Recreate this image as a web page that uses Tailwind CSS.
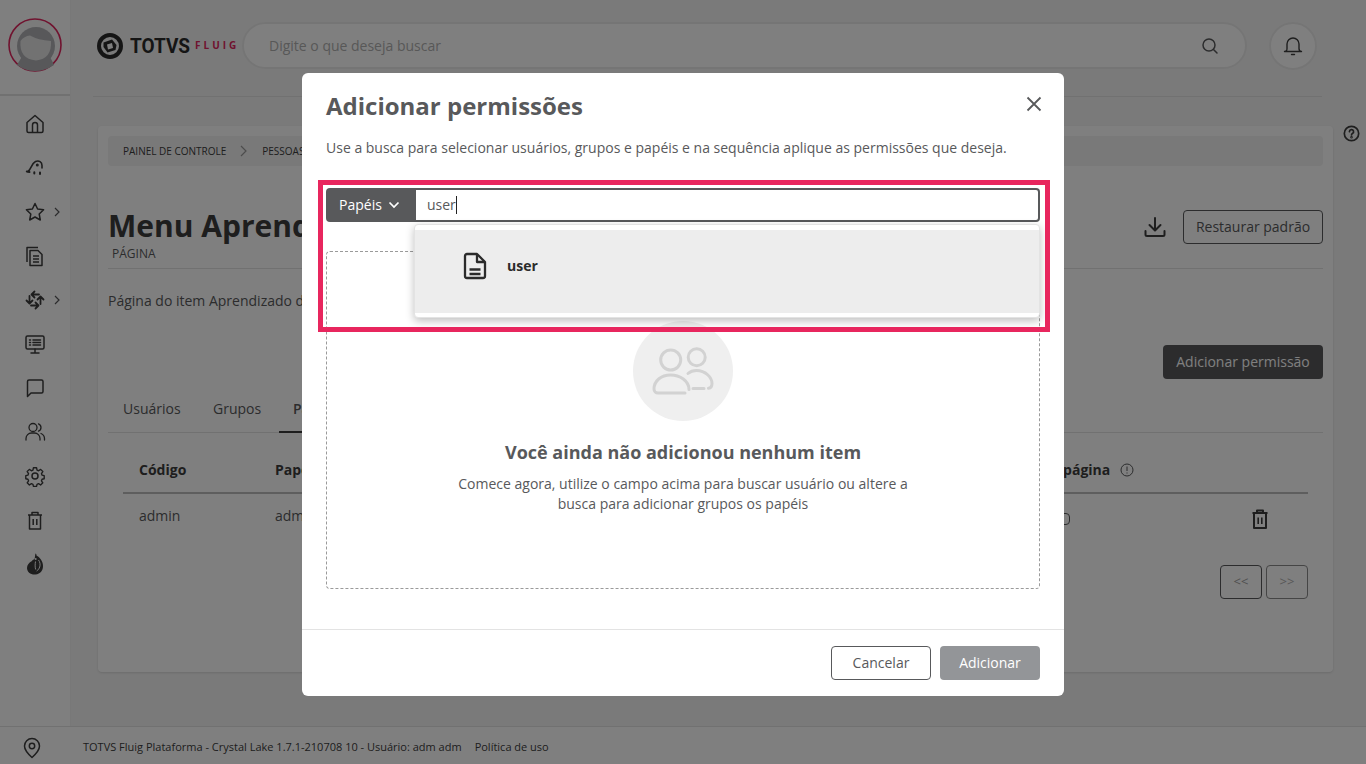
<!DOCTYPE html>
<html lang="pt-BR">
<head>
  <meta charset="UTF-8" />
  <title>Menu Aprendizado</title>
  <script src="https://cdn.jsdelivr.net/npm/@tailwindcss/browser@4"></script>
</head>
<body class="relative w-[1366px] h-[764px] overflow-hidden bg-[#f5f5f5] font-['Open_Sans',sans-serif] text-[#58595b]">
  <div class="flex flex-col h-full">
    <div class="flex flex-1 min-h-0">
      <!-- Sidebar -->
      <aside class="w-[71px] shrink-0 bg-white border-r border-[#f0f0f0]">
        <div class="h-[96px] border-b-2 border-[#e3e3e3] pt-[18px] pl-[8px]">
          <svg width="54" height="54" viewBox="0 0 54 54">
            <circle cx="27" cy="27" r="26" fill="#f7f7f7" stroke="#e0265f" stroke-width="1.600"/>
            <path d="M9 47 Q14 38 18 33 L38 33 Q42 38 46 47 Q37 53 27 53 Q17 53 9 47 Z" fill="#b0b1b5"/>
            <circle cx="28" cy="28" r="19" fill="#b0b1b5"/>
            <path d="M12.500 23 Q16 18 22 17.500 Q30 22 43 23 Q44 41 28 42.500 Q11 41 12.500 23 Z" fill="#e4e4e4"/>
          </svg>
        </div>
        <nav class="flex flex-col items-center gap-[20px] pt-[16px] pr-[1px] text-[#3d3d3d]">
          <svg class="w-6 h-6" viewBox="0 0 24 24" fill="none" stroke="currentColor" stroke-width="1.500" stroke-linejoin="round"><path d="M4 10.500 12 3.500l8 7V19a1.500 1.500 0 0 1-1.500 1.500h-13A1.500 1.500 0 0 1 4 19Z"/><path d="M9.500 20.500V13a2.500 2.500 0 0 1 5 0v7.500"/></svg>
          <svg class="w-6 h-6" viewBox="0 0 24 24" fill="none" stroke="currentColor" stroke-width="1.600" stroke-linecap="round"><path d="M5 15.500C8 13.500 8.500 7.500 12.500 5.500 16 4 19 6 19 9.500V12"/><path d="M3.800 15.500 6.500 16" stroke-width="2"/><circle cx="14.300" cy="9" r=".7"/><path d="M11.300 16.200v1.200M17 16.500v1.500" stroke-width="2"/></svg>
          <div class="relative w-6 h-6">
            <svg class="w-6 h-6" viewBox="0 0 24 24" fill="none" stroke="currentColor" stroke-width="1.500" stroke-linejoin="round"><path d="m12 3.500 2.600 5.500 6 .8-4.400 4.200 1.100 6L12 17l-5.300 3 1.100-6-4.400-4.200 6-.8Z"/></svg>
            <svg class="absolute top-[6px] left-[29px] w-[10px] h-[12px]" viewBox="0 0 10 12" fill="none" stroke="#58595b" stroke-width="1.200"><path d="m3 2 4 4-4 4"/></svg>
          </div>
          <svg class="w-6 h-6" viewBox="0 0 24 24" fill="none" stroke="currentColor" stroke-width="1.500" stroke-linejoin="round"><path d="M4 18V3.500h11"/><path d="M7 6.500h8l4 4v11H7Z"/><path d="M10 12h6M10 15h6M10 18h6"/></svg>
          <div class="relative w-6 h-6">
            <svg class="w-6 h-6" viewBox="0 0 24 24" fill="none" stroke="currentColor" stroke-width="1.800" stroke-linecap="round" stroke-linejoin="round">
              <path d="M16 6.500H9M11.500 3.500l-3 3 3 3"/>
              <path d="M16 6.500H9M11.500 3.500l-3 3 3 3" transform="rotate(-90 12 12)"/>
              <path d="M16 6.500H9M11.500 3.500l-3 3 3 3" transform="rotate(180 12 12)"/>
              <path d="M16 6.500H9M11.500 3.500l-3 3 3 3" transform="rotate(90 12 12)"/>
            </svg>
            <svg class="absolute top-[6px] left-[29px] w-[10px] h-[12px]" viewBox="0 0 10 12" fill="none" stroke="#58595b" stroke-width="1.200"><path d="m3 2 4 4-4 4"/></svg>
          </div>
          <svg class="w-6 h-6" viewBox="0 0 24 24" fill="none" stroke="currentColor" stroke-width="1.500" stroke-linecap="round" stroke-linejoin="round"><rect x="3" y="4" width="18" height="13" rx="1.500"/><path d="M12 17v4M8 21h8M6.500 8h1M6.500 10.500h1M6.500 13h1M10 8h7.500M10 10.500h7.500M10 13h7.500"/></svg>
          <svg class="w-6 h-6" viewBox="0 0 24 24" fill="none" stroke="currentColor" stroke-width="1.500" stroke-linejoin="round"><path d="M4.500 5.500A1.500 1.500 0 0 1 6 4h12.500A1.500 1.500 0 0 1 20 5.500v10a1.500 1.500 0 0 1-1.500 1.500H8l-3.500 3.500Z"/></svg>
          <svg class="w-6 h-6" viewBox="0 0 24 24" fill="none" stroke="currentColor" stroke-width="1.300" stroke-linecap="round"><circle cx="10" cy="7.500" r="4"/><path d="M3 20v-1.500a5.500 5.500 0 0 1 5.500-5.500h3a5.500 5.500 0 0 1 5.500 5.500V20M15.500 3.800a4 4 0 0 1 0 7.400M18 13.500a5.500 5.500 0 0 1 3.500 5V20"/></svg>
          <svg class="w-6 h-6" viewBox="0 0 24 24" fill="none" stroke="currentColor" stroke-width="1.500" stroke-linejoin="round"><circle cx="12" cy="12" r="3"/><path d="M10.300 3h3.400l.5 2.600 1.700.7 2.200-1.500 2.400 2.400-1.500 2.200.7 1.700 2.300.5v3.400l-2.300.5-.7 1.700 1.500 2.200-2.400 2.400-2.200-1.500-1.700.7-.5 2.300h-3.400l-.5-2.300-1.700-.7-2.200 1.500-2.400-2.400 1.500-2.200-.7-1.700-2.300-.5v-3.400l2.300-.5.7-1.700-1.500-2.200 2.400-2.400 2.200 1.500 1.700-.7Z" transform="translate(12 12) scale(.92) translate(-12 -12)"/></svg>
          <svg class="w-6 h-6" viewBox="0 0 24 24" fill="none" stroke="currentColor" stroke-width="1.500" stroke-linejoin="round"><path d="M5 7h14M9 7V4.500h6V7M6.500 7h11v14h-11Z"/><path d="M10.200 11v6M13.800 11v6"/></svg>
          <svg class="w-6 h-6" viewBox="0 0 24 24" fill="currentColor"><path d="M12.500 1.500c.8 0 1 1 1 2 3 1.500 6.500 5.500 6.500 10.500 0 4.500-2.500 8-7.500 8.500-5 .4-8.500-2.500-8.500-6.500 0-3 2-5.500 5-7 .5-1 1.500-1.500 2.500-2 .5-1.500.5-4 1-5.500Z"/><path d="M15.500 8c1.500 2 2 4.500 1.200 7-.5 1.500-1.500 3-3 4M12.500 9.500c-.5 3-.5 6 .2 8" fill="none" stroke="#f5f5f5"/><circle cx="12.700" cy="7" r="1" fill="#f5f5f5"/></svg>
        </nav>
      </aside>

      <main class="relative flex-1 min-w-0">
        <!-- Top bar -->
        <header class="ml-[22px] mr-[44px] h-[97px] border-b border-[#e3e3e3] flex items-center pb-[5px]">
          <div class="w-[149px] shrink-0 flex items-center overflow-hidden">
            <svg class="w-[26px] h-[26px] ml-[4px] shrink-0" viewBox="0 0 26 26"><circle cx="13" cy="13" r="11" fill="none" stroke="#2b2b2b" stroke-width="4"/><path d="M6.500 9.500 15 6.500 19.500 12 18.500 17 10.500 19.500 6.500 14Z" fill="#2b2b2b"/><path d="M10 11.500 15 10 16 15 11 16.500Z" fill="#fff"/></svg>
            <span class="ml-[7px] w-[58px] shrink-0 font-['Roboto',sans-serif] font-bold text-[20px] leading-none text-[#2b2b2b] scale-x-[.95] origin-left">TOTVS</span>
            <span class="ml-[7px] font-bold text-[10px] tracking-[3px] text-[#e0265f]">FLUIG</span>
          </div>
          <div class="w-[1005px] h-[47px] shrink-0 bg-white border-2 border-[#ebebeb] rounded-full flex items-center justify-between pl-[25px] pr-[26px]">
            <span class="text-sm text-[#b0b0b0]">Digite o que deseja buscar</span>
            <svg class="w-[18px] h-[18px] text-[#58595b]" viewBox="0 0 18 18" fill="none" stroke="currentColor" stroke-width="1.500" stroke-linecap="round"><circle cx="8" cy="8" r="6"/><path d="m12.500 12.500 3.500 3.500"/></svg>
          </div>
          <div class="ml-[22px] w-[48px] h-[48px] shrink-0 bg-white border-2 border-[#ebebeb] rounded-full flex items-center justify-center">
            <svg class="w-[20px] h-[20px]" viewBox="0 0 20 20" fill="none" stroke="#3d3d3d" stroke-width="1.400" stroke-linecap="round" stroke-linejoin="round"><path d="M1.500 15.500c2 0 2.500-1 2.500-3V8a6 6 0 0 1 12 0v4.500c0 2 .5 3 2.500 3Z"/><path d="M8.500 18.500h3"/></svg>
          </div>
        </header>

        <svg class="absolute left-[1272px] top-[125px] w-[17px] h-[17px]" viewBox="0 0 18 18" fill="none" stroke="#3d3d3d" stroke-width="1.800"><circle cx="9" cy="9" r="7.600"/><path d="M6.800 7a2.200 2.200 0 1 1 3.200 2c-.7.400-1 .8-1 1.600" stroke-linecap="round"/><circle cx="9" cy="13" r=".5"/></svg>

        <!-- Card -->
        <section class="ml-[27px] mt-[29px] w-[1235px] h-[546px] bg-white rounded shadow-sm p-[10px] pb-0">
          <div class="h-[30px] bg-[#f2f2f2] rounded flex items-center pl-[15px] text-[10px] text-[#3d3d3d]">
            <span>PAINEL DE CONTROLE</span>
            <svg class="w-[8px] h-[12px] mx-[14px]" viewBox="0 0 8 12" fill="none" stroke="#9a9a9a" stroke-width="1.200"><path d="m1 1 5 5-5 5"/></svg>
            <span>PESSOAS</span>
          </div>
          <div class="flex items-start justify-between mt-[44px]">
            <div>
              <h1 class="text-[30px] leading-[32px] font-bold text-[#3d3d3d]">Menu Aprendizado</h1>
              <p class="ml-[4px] mt-[3px] text-xs leading-[18px]">PÁGINA</p>
            </div>
            <div class="flex items-center">
              <svg class="w-[24px] h-[24px] mr-[16px]" viewBox="0 0 24 24" fill="none" stroke="#3d3d3d" stroke-width="2" stroke-linecap="round" stroke-linejoin="round"><path d="M12 3v12M6.500 10l5.500 5.500 5.500-5.500M2.500 16v3.500a1.500 1.500 0 0 0 1.500 1.500h16a1.500 1.500 0 0 0 1.500-1.500V16"/></svg>
              <button class="w-[140px] h-[34px] border border-[#58595b] rounded text-sm">Restaurar padrão</button>
            </div>
          </div>
          <div class="h-px bg-[#e3e3e3] mt-[5px]"></div>
          <p class="mt-[22px] text-sm leading-[20px]">Página do item Aprendizado do menu.</p>
          <div class="flex justify-end mt-[34px]">
            <button class="w-[160px] h-[34px] bg-[#58595b] text-white rounded text-sm">Adicionar permissão</button>
          </div>
          <div class="mt-[14px] h-[40px] border-b border-[#e3e3e3] flex text-sm pl-[15px]">
            <span class="pt-[6px] w-[90px]">Usuários</span>
            <span class="pt-[6px] w-[80px]">Grupos</span>
            <span class="pt-[6px] w-[60px] -ml-[14px] pl-[14px] font-semibold border-b-2 border-[#3d3d3d] h-[40px]">Papéis</span>
          </div>
          <div class="mx-[15px]">
            <div class="h-[61px] border-b-2 border-[#bdbdbd] flex items-center pt-[15px] text-sm font-bold text-[#3d3d3d]">
              <span class="ml-[16px] w-[136px]">Código</span>
              <span class="w-[600px]">Papel</span>
              <span class="ml-[91px]">Permissão da página</span>
              <svg class="ml-[10px] w-[14px] h-[14px]" viewBox="0 0 14 14" fill="none" stroke="#58595b"><circle cx="7" cy="7" r="6"/><path d="M7 3.500v4.500M7 9.500v1"/></svg>
            </div>
            <div class="h-[50px] flex items-center text-sm">
              <span class="ml-[16px] w-[136px] -mt-[6px]">admin</span>
              <span class="w-[779px] -mt-[6px]">admin</span>
              <span class="w-[16px] h-[12px] border border-[#58595b] rounded-sm"></span>
              <svg class="ml-[178px] w-[24px] h-[24px]" viewBox="0 0 24 24" fill="none" stroke="#3d3d3d" stroke-width="2" stroke-linejoin="round"><path d="M4.500 6h15M9 6V3.500h6V6M6 6h12v15H6Z"/><path d="M10.200 10.500v6.500M13.800 10.500v6.500" stroke-width="1.600"/></svg>
            </div>
            <div class="flex justify-end gap-[4px] mt-[21px] text-[13px]">
              <button class="w-[42px] h-[34px] border border-[#58595b] rounded text-[#a0a0a0]">&lt;&lt;</button>
              <button class="w-[42px] h-[34px] border border-[#8a8a8a] rounded text-[#b0b0b0]">&gt;&gt;</button>
            </div>
          </div>
        </section>
      </main>
    </div>

    <!-- Footer -->
    <footer class="h-[38px] shrink-0 bg-white border-t border-[#e3e3e3] flex items-center pt-[4px] text-[11px] text-[#3d3d3d]">
      <svg class="ml-[22px] w-[20px] h-[22px]" viewBox="0 0 20 22" fill="none" stroke="#3d3d3d" stroke-width="1.500" stroke-linejoin="round"><path d="M10 20.500C5 16 2.500 12.500 2.500 9a7.500 7.500 0 0 1 15 0c0 3.500-2.500 7-7.500 11.500Z"/><circle cx="10" cy="9" r="2.700"/></svg>
      <span class="ml-[41px]">TOTVS Fluig Plataforma - Crystal Lake 1.7.1-210708 10 - Usuário: adm adm</span>
      <span class="ml-[13px]">Política de uso</span>
    </footer>
  </div>

  <!-- Overlay and modal -->
  <div class="absolute inset-0 bg-black/50 flex justify-center items-start pt-[73px]">
    <div class="relative w-[762px] h-[623px] bg-white rounded-md flex flex-col">
      <div class="px-[24px] flex-1">
        <div class="flex items-center justify-between pt-[16px]">
          <h2 class="text-[24px] leading-[33px] font-bold">Adicionar permissões</h2>
          <svg class="w-[16px] h-[16px] mr-[-2px] -mt-[3px]" viewBox="0 0 16 16" fill="none" stroke="#58595b" stroke-width="1.800"><path d="m1.500 1.500 13 13M14.500 1.500l-13 13"/></svg>
        </div>
        <p class="mt-[16px] text-sm leading-[20px]">Use a busca para selecionar usuários, grupos e papéis e na sequência aplique as permissões que deseja.</p>
        <div class="mt-[30px] flex h-[34px]">
          <div class="w-[90px] bg-[#58595b] rounded-l flex items-center justify-center gap-[6px] pr-[3px] text-white text-sm font-medium">
            <span>Papéis</span>
            <svg class="w-[12px] h-[8px]" viewBox="0 0 12 8" fill="none" stroke="#fff" stroke-width="1.700"><path d="m1.500 1.500 4.500 4.500 4.500-4.500"/></svg>
          </div>
          <div class="flex-1 border-2 border-l-0 border-[#58595b] rounded-r flex items-center pl-[11px] text-sm">
            <span>user</span><span class="w-px h-[18px] bg-[#222]"></span>
          </div>
        </div>
        <div class="mt-[29px] h-[338px] border border-dashed border-[#9a9a9a] rounded flex flex-col items-center pt-[69px]">
          <div class="w-[100px] h-[100px] rounded-full bg-[#efefef] flex items-center justify-center">
            <svg class="w-[62px] h-[50px]" viewBox="0 0 62 50" fill="none" stroke="#d2d2d2" stroke-width="3" stroke-linecap="round"><circle cx="18.700" cy="14" r="10"/><circle cx="44.700" cy="11.300" r="8.500"/><path d="M33 47H6a4 4 0 0 1-4-4c0-8 7-14 16.500-14S37 35 37 43.500"/><path d="M36 27.500c2.200-2 5-3 8.500-3 9 0 15.500 7 15.500 13 0 2.500-1.300 4.500-3.500 4.800M52 42.500h-11"/></svg>
          </div>
          <h3 class="mt-[19px] text-lg leading-[25px] font-bold">Você ainda não adicionou nenhum item</h3>
          <p class="mt-[9px] w-[480px] text-center text-sm leading-[20px]">Comece agora, utilize o campo acima para buscar usuário ou altere a busca para adicionar grupos os papéis</p>
        </div>
      </div>
      <div class="h-[67px] border-t border-[#e3e3e3] flex justify-end items-start gap-[9px] pt-[16px] pr-[24px]">
        <button class="w-[100px] h-[34px] border border-[#58595b] rounded text-sm">Cancelar</button>
        <button class="w-[100px] h-[34px] bg-[#939598] text-white rounded text-sm font-medium">Adicionar</button>
      </div>

      <!-- Dropdown over the dashed box -->
      <div class="absolute left-[112px] top-[151px] w-[626px] h-[94px] bg-white rounded border border-[#e3e3e3] shadow-[0_3px_8px_rgba(0,0,0,0.25)] pt-[5px]">
        <div class="h-[83px] bg-[#ededed] flex items-start pl-[48px] pt-[22px]">
          <svg class="w-[24px] h-[28px]" viewBox="0 0 24 28" fill="none" stroke="#2b2b2b" stroke-width="2.300" stroke-linejoin="round"><path d="M2 4a2 2 0 0 1 2-2h10l8 8v14a2 2 0 0 1-2 2H4a2 2 0 0 1-2-2Z"/><path d="M14 2v8h8"/><path d="M6.500 17.500h11M6.500 22h11"/></svg>
          <span class="ml-[20px] mt-[4px] text-sm font-bold text-[#2b2b2b]">user</span>
        </div>
      </div>

      <!-- Highlight annotation -->
      <div class="absolute left-[16px] top-[107px] w-[732px] h-[152px] border-[5px] border-[#e8265e] pointer-events-none"></div>
    </div>
  </div>
</body>
</html>
